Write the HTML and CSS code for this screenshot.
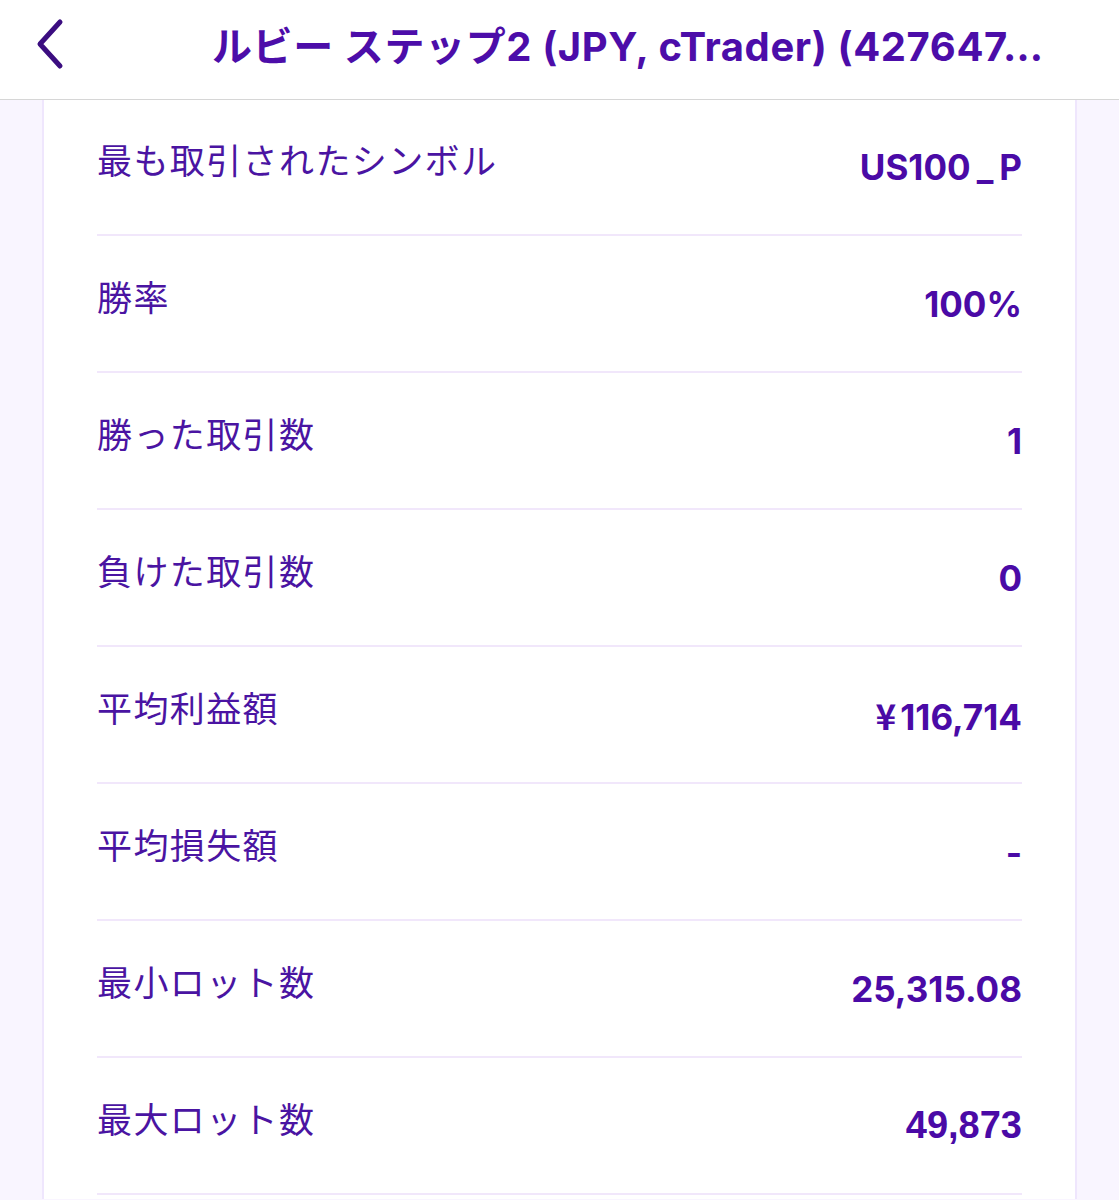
FILE: index.html
```html
<!DOCTYPE html>
<html lang="ja">
<head>
<meta charset="utf-8">
<title>ルビー ステップ2</title>
<link rel="stylesheet" href="styles.css">
</head>
<body>
<header class="topbar">
  <button class="back" aria-label="戻る">
    <svg width="40" height="56" viewBox="0 0 40 56"><path d="M30 6 L10 28 L30 50" fill="none" stroke="#3b0d80" stroke-width="5" stroke-linecap="round" stroke-linejoin="round"/></svg>
  </button>
  <h1 class="title">ルビー ステップ2 (JPY, cTrader) (427647…</h1>
</header>
<main class="content">
  <section class="card">
    <div class="row"><span class="label">最も取引されたシンボル</span><span class="value">US100<span class="us">_</span>P</span></div>
    <div class="row"><span class="label">勝率</span><span class="value">100%</span></div>
    <div class="row"><span class="label">勝った取引数</span><span class="value">1</span></div>
    <div class="row"><span class="label">負けた取引数</span><span class="value">0</span></div>
    <div class="row"><span class="label">平均利益額</span><span class="value"><span class="yen">¥</span>116,714</span></div>
    <div class="row"><span class="label">平均損失額</span><span class="value">-</span></div>
    <div class="row"><span class="label">最小ロット数</span><span class="value">25,315.08</span></div>
    <div class="row"><span class="label">最大ロット数</span><span class="value alt">49,873</span></div>
  </section>
</main>
</body>
</html>
```
FILE: styles.css
```css
html, body {
  margin: 0;
  padding: 0;
  height: 100%;
  overflow: hidden;
}
body {
  background: #f9f5ff;
  font-family: "Noto Sans CJK JP", "Noto Sans", sans-serif;
}
.topbar {
  height: 100px;
  background: #ffffff;
  border-bottom: 1px solid #d6d6d6;
  display: flex;
  align-items: center;
  box-sizing: border-box;
}
.back {
  width: 48px;
  height: 60px;
  margin-left: 26px;
  margin-bottom: 12px;
  padding: 0;
  border: none;
  background: none;
  display: flex;
  align-items: center;
  justify-content: center;
}
.title {
  margin: 0 0 12px 138px;
  width: 860px;
  font-family: "Inter", "Noto Sans CJK JP", sans-serif;
  font-weight: 700;
  font-size: 40px;
  letter-spacing: 0.6px;
  color: #4c0da9;
  white-space: nowrap;
}
.content {
  height: 1099px;
  overflow: hidden;
}
.card {
  margin: -1px 42px 0;
  background: #ffffff;
  border-left: 2px solid #efe6fd;
  border-right: 2px solid #efe6fd;
  padding: 0 53px 40px;
}
.row {
  height: 135px;
  border-bottom: 2px solid #f1e7fb;
  display: flex;
  align-items: center;
  justify-content: space-between;
}
.label {
  font-family: "Noto Sans CJK JP", sans-serif;
  font-size: 35px;
  font-weight: 400;
  letter-spacing: 1.4px;
  color: #4a14a2;
  padding-bottom: 16px;
}
.value {
  font-family: "Inter", "Noto Sans", sans-serif;
  font-weight: 700;
  font-size: 35px;
  letter-spacing: 0;
  color: #4a0aa6;
}
.us {
  margin: 0 6px;
}
.yen {
  font-family: "Noto Sans CJK JP", sans-serif;
  margin-right: 4px;
}
.value.alt {
  font-family: "Liberation Sans", Arial, sans-serif;
  font-size: 38px;
}
```
